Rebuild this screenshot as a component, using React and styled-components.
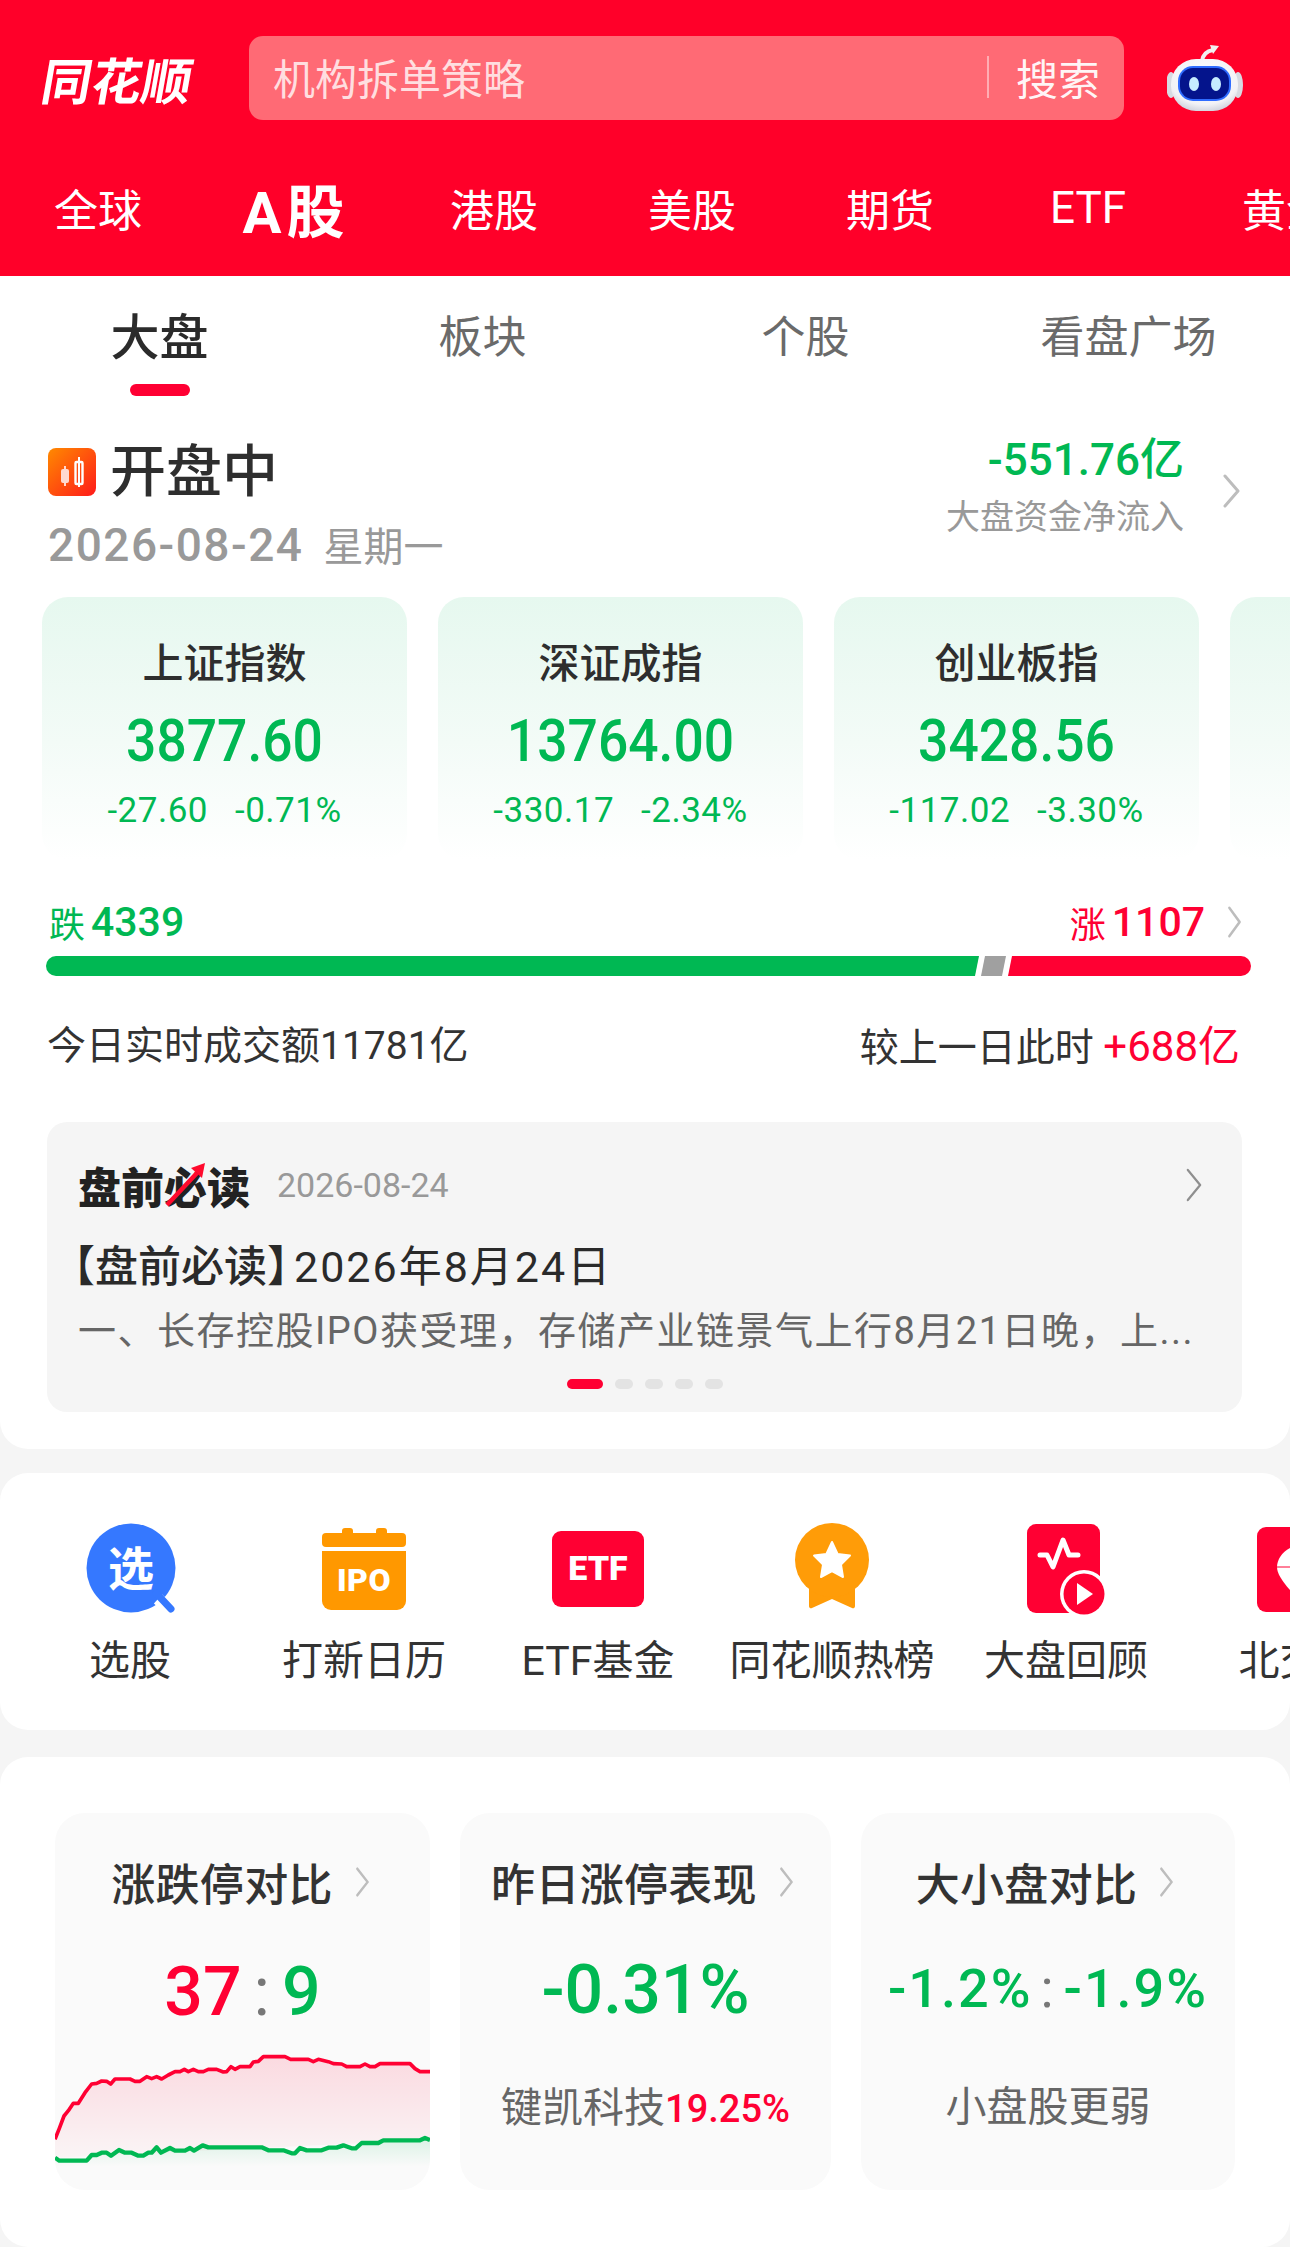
import React from "react";
import styled, { createGlobalStyle } from "styled-components";

const RED = "#ff0033";
const GREEN = "#00b853";
const SANS = `Roboto, "Noto Sans CJK SC", sans-serif`;
const CJK = `"Noto Sans CJK SC", sans-serif`;

const Global = createGlobalStyle`
  html, body { margin: 0; padding: 0; background: #f5f5f5; }
  body { font-family: ${SANS}; width: 1290px; height: 2247px; overflow: hidden; }
  * { box-sizing: border-box; }
`;

const Page = styled.div`
  width: 1290px;
  height: 2247px;
  overflow: hidden;
  background: #f5f5f5;
`;

const Header = styled.header`
  background: #ff0029;
  height: 276px;
  overflow: hidden;
  padding-top: 36px;
`;
const TopBar = styled.div`
  display: flex;
  align-items: center;
  height: 84px;
  padding-left: 43px;
`;
const Logo = styled.div`
  width: 206px;
  font-family: ${CJK};
  font-weight: 700;
  font-size: 50px;
  line-height: 84px;
  color: #fff;
  transform-origin: left center;
  transform: skewX(-10deg);
`;
const SearchBox = styled.div`
  width: 875px;
  height: 84px;
  border-radius: 14px;
  background: #ff6a75;
  display: flex;
  align-items: center;
  padding: 0 24px 3px;
  font-family: ${CJK};
  font-size: 42px;
  color: rgba(255, 255, 255, 0.78);
`;
const Placeholder = styled.span`
  flex: 1;
`;
const SearchDivider = styled.i`
  width: 2px;
  height: 42px;
  background: rgba(255, 255, 255, 0.45);
  margin-right: 27px;
`;
const SearchAction = styled.span`
  color: rgba(255, 255, 255, 0.95);
`;
const RobotSvg = styled.svg`
  width: 76px;
  height: 70px;
  margin-left: 43px;
  flex: none;
`;
const MarketTabs = styled.nav`
  display: flex;
  margin-top: 53px;
  margin-left: -1px;
  height: 70px;
  align-items: center;
`;
const MarketTab = styled.div`
  flex: 0 0 198px;
  text-align: center;
  font-family: ${SANS};
  color: #fff;
  font-size: ${(p) => (p.$on ? 58 : 44)}px;
  font-weight: ${(p) => (p.$on ? 700 : 400)};
  letter-spacing: ${(p) => (p.$on ? 5 : 0)}px;
  white-space: nowrap;
`;

const MainCard = styled.section`
  background: #fff;
  height: 1173px;
  border-radius: 0 0 28px 28px;
  overflow: hidden;
`;
const SubTabs = styled.div`
  display: grid;
  grid-template-columns: repeat(4, 323px);
  margin-left: -2px;
  height: 120px;
`;
const SubTab = styled.div`
  position: relative;
  text-align: center;
  font-family: ${CJK};
  line-height: 86px;
  font-size: ${(p) => (p.$on ? 49 : 44)}px;
  font-weight: ${(p) => (p.$on ? 500 : 400)};
  color: ${(p) => (p.$on ? "#2b2b2b" : "#6a6a6a")};
  padding-top: 15px;
  &::after {
    content: "";
    display: ${(p) => (p.$on ? "block" : "none")};
    position: absolute;
    left: 50%;
    margin-left: -30px;
    top: 108px;
    width: 60px;
    height: 12px;
    border-radius: 6px;
    background: ${RED};
  }
`;

const StatusRow = styled.div`
  height: 201px;
  padding: 40px 49px 0 48px;
  display: flex;
  justify-content: space-between;
  align-items: flex-start;
`;
const StatusLeft = styled.div``;
const StatusTitle = styled.div`
  display: flex;
  align-items: center;
  height: 72px;
  gap: 14px;
`;
const StatusWord = styled.span`
  font-family: ${CJK};
  font-size: 56px;
  line-height: 64px;
  font-weight: 500;
  color: #2e2e2e;
  padding-bottom: 10px;
`;
const DateLine = styled.div`
  height: 74px;
  line-height: 72px;
  color: #999;
  font-size: 46px;
  font-weight: 500;
  letter-spacing: 1.5px;
  white-space: nowrap;
`;
const Weekday = styled.span`
  font-family: ${CJK};
  font-size: 40px;
  font-weight: 400;
  letter-spacing: 0;
  margin-left: 20px;
`;
const FlowBlock = styled.div`
  display: flex;
  align-items: center;
  gap: 38px;
`;
const FlowText = styled.div`
  text-align: right;
`;
const FlowValue = styled.div`
  line-height: 48px;
  font-size: 44px;
  font-weight: 500;
  color: ${GREEN};
`;
const FlowLabel = styled.div`
  line-height: 62px;
  font-family: ${CJK};
  font-size: 34px;
  color: #999;
`;

const IndexRow = styled.div`
  display: flex;
  gap: 31px;
  padding-left: 42px;
  height: 263px;
  overflow: hidden;
`;
const IndexCard = styled.div`
  flex: 0 0 365px;
  height: 263px;
  border-radius: 26px;
  background: linear-gradient(180deg, #e6f8ef 0%, #f3fbf7 55%, #ffffff 100%);
  text-align: center;
  padding-top: 37px;
`;
const IndexName = styled.div`
  font-family: ${CJK};
  font-size: 41px;
  font-weight: 500;
  line-height: 52px;
  height: 52px;
  color: #2e2e2e;
`;
const IndexValue = styled.div`
  margin-top: 19px;
  line-height: 72px;
  height: 72px;
  font-size: 60px;
  font-weight: 500;
  color: ${GREEN};
  transform: scaleX(0.89);
`;
const IndexChange = styled.div`
  margin-top: 12px;
  line-height: 44px;
  height: 44px;
  font-size: 35px;
  letter-spacing: 0.5px;
  color: ${GREEN};
  display: flex;
  justify-content: center;
  gap: 27px;
`;

const BreadthHead = styled.div`
  margin-top: 40px;
  height: 44px;
  padding: 0 48px 0 49px;
  display: flex;
  justify-content: space-between;
  align-items: center;
`;
const BreadthText = styled.div`
  display: flex;
  align-items: center;
  font-size: 41px;
  font-weight: 500;
  line-height: 44px;
  color: ${(p) => p.$color};
`;
const BreadthWord = styled.span`
  font-family: ${CJK};
  font-size: 36px;
  font-weight: 400;
  margin-right: 6px;
`;
const BreadthSpacer = styled.i`
  width: 22px;
`;
const Bar = styled.div`
  margin: 12px 39px 0 46px;
  height: 20px;
  display: flex;
  gap: 2px;
`;
const BarSegment = styled.div`
  height: 20px;
  flex: ${(p) => p.$grow};
  background: ${(p) => p.$color};
  border-radius: ${(p) => p.$radius};
  clip-path: ${(p) => p.$clip};
`;
const TurnoverRow = styled.div`
  margin-top: 41px;
  height: 50px;
  padding: 0 50px 0 47px;
  display: flex;
  justify-content: space-between;
  align-items: center;
  font-size: 39px;
  color: #333;
  font-family: ${SANS};
`;
const RedText = styled.span`
  color: ${RED};
  font-size: 42px;
`;

const ReadPanel = styled.div`
  margin: 55px 48px 0 47px;
  height: 290px;
  border-radius: 20px;
  background: #f5f5f5;
  padding: 40px 39px 0 31px;
`;
const ReadHead = styled.div`
  display: flex;
  align-items: center;
  height: 46px;
`;
const ReadLogo = styled.div`
  position: relative;
  font-family: ${CJK};
  font-weight: 900;
  font-size: 43px;
  color: #222;
  line-height: 46px;
`;
const ReadArrow = styled.svg`
  position: absolute;
  left: 84px;
  top: 0;
  width: 46px;
  height: 46px;
`;
const ReadDate = styled.span`
  margin-left: 27px;
  font-size: 34px;
  color: #999;
  flex: 1;
`;
const ReadTitle = styled.div`
  margin: 29px 0 0 -26px;
  line-height: 60px;
  font-size: 43px;
  font-weight: 500;
  font-family: ${SANS};
  color: #2a2a2a;
  white-space: nowrap;
`;
const ReadBracket = styled.span`
  margin-right: -4px;
  letter-spacing: 0;
`;
const ReadTitleDate = styled.span`
  letter-spacing: 2px;
  margin-left: -12px;
  font-weight: 400;
`;
const ReadBody = styled.div`
  margin-top: 8px;
  line-height: 52px;
  font-size: 38px;
  letter-spacing: 1.5px;
  color: #666;
  white-space: nowrap;
`;
const Dots = styled.div`
  margin: 22px -39px 0 -31px;
  display: flex;
  gap: 12px;
  justify-content: center;
`;
const Dot = styled.i`
  display: block;
  height: 10px;
  width: ${(p) => (p.$on ? 36 : 18)}px;
  border-radius: 5px;
  background: ${(p) => (p.$on ? RED : "#e3e3e3")};
`;

const QuickCard = styled.section`
  margin-top: 24px;
  height: 257px;
  background: #fff;
  border-radius: 28px;
  padding: 50px 0 0 13px;
  display: flex;
  overflow: hidden;
`;
const QuickItem = styled.div`
  flex: 0 0 234px;
  display: flex;
  flex-direction: column;
  align-items: center;
`;
const QuickIcon = styled.svg`
  width: 120px;
  height: 95px;
  flex: none;
`;
const QuickLabel = styled.div`
  margin-top: 18px;
  line-height: 50px;
  font-size: 41px;
  font-family: ${SANS};
  color: #333;
  white-space: nowrap;
`;

const StatsCard = styled.section`
  margin-top: 27px;
  height: 490px;
  background: #fff;
  border-radius: 28px;
  padding: 56px 55px 0;
  display: grid;
  grid-template-columns: 375px 371px 374px;
  column-gap: 30px;
  align-items: start;
`;
const StatBox = styled.div`
  height: 377px;
  border-radius: 30px;
  background: #fafafa;
  overflow: hidden;
  text-align: center;
  padding-top: 39px;
  display: flex;
  flex-direction: column;
`;
const StatTitle = styled.div`
  height: 60px;
  flex: none;
  display: flex;
  align-items: center;
  justify-content: center;
  gap: 22px;
  font-family: ${CJK};
  font-size: 44px;
  letter-spacing: 0.3px;
  font-weight: 500;
  color: #333;
  white-space: nowrap;
  padding-right: ${(p) => p.$shift || 0}px;
`;
const StatValue = styled.div`
  margin-top: ${(p) => p.$top}px;
  height: 56px;
  flex: none;
  line-height: 56px;
  font-size: ${(p) => p.$size}px;
  letter-spacing: ${(p) => p.$spacing || 0}px;
  font-weight: 500;
  white-space: nowrap;
  color: ${(p) => p.$color || GREEN};
`;
const Colon = styled.span`
  color: #777;
  font-weight: 400;
  margin: 0 ${(p) => p.$gap}px;
`;
const GreenText = styled.span`
  color: ${GREEN};
`;
const StatNote = styled.div`
  margin-top: 61px;
  line-height: 50px;
  font-size: 41px;
  color: #666;
  font-family: ${CJK};
  white-space: nowrap;
`;
const NoteRed = styled.span`
  font-family: ${SANS};
  font-weight: 500;
  font-size: 38px;
  color: ${RED};
`;
const ChartSvg = styled.svg`
  display: block;
  flex: none;
  margin-top: auto;
  width: 375px;
  height: 170px;
`;

const Chevron = ({ w = 19, h = 34, c = "#bdbdbd", sw = 3 }) => (
  <svg width={w} height={h} viewBox="0 0 19 34" fill="none" preserveAspectRatio="none" style={{ flex: "none" }}>
    <path d="M3 2 L16 17 L3 32" stroke={c} strokeWidth={sw} strokeLinecap="round" strokeLinejoin="round" />
  </svg>
);

const Robot = () => (
  <RobotSvg viewBox="1168 42 76 70">
    <defs>
      <radialGradient id="head" cx="50%" cy="35%" r="70%">
        <stop offset="0" stopColor="#ffffff" />
        <stop offset="0.75" stopColor="#f2f2f6" />
        <stop offset="1" stopColor="#c9ccd8" />
      </radialGradient>
    </defs>
    <path d="M1203 60 C1204 53 1208 50 1214 49" stroke="#f1f1f1" strokeWidth="4" fill="none" />
    <path d="M1211 44 L1220 45 L1214 53 Z" fill="#f1f1f1" />
    <ellipse cx="1172" cy="84" rx="5" ry="13" fill="#d8dae2" />
    <ellipse cx="1239" cy="84" rx="5" ry="13" fill="#d8dae2" />
    <rect x="1172" y="58" width="67" height="52" rx="25" fill="url(#head)" />
    <rect x="1179" y="65" width="53" height="35" rx="15" fill="#2f6cff" />
    <rect x="1181" y="67" width="49" height="31" rx="13" fill="#04148c" />
    <ellipse cx="1195" cy="83" rx="5" ry="7" fill="#c6ecff" />
    <ellipse cx="1217" cy="83" rx="5" ry="7" fill="#c6ecff" />
  </RobotSvg>
);

const CandleIcon = () => (
  <svg width="48" height="48" viewBox="0 0 48 48" style={{ flex: "none" }}>
    <defs>
      <linearGradient id="cand" x1="0" y1="0" x2="1" y2="1">
        <stop offset="0" stopColor="#ff8a00" />
        <stop offset="1" stopColor="#ff1a1a" />
      </linearGradient>
    </defs>
    <rect width="48" height="48" rx="8" fill="url(#cand)" />
    <rect x="13" y="21" width="8" height="14" rx="2" fill="#ffd8d0" />
    <rect x="16" y="18" width="2" height="20" fill="#ffd8d0" />
    <rect x="27.5" y="14" width="7" height="22" rx="1" fill="none" stroke="#fff" strokeWidth="2.4" />
    <rect x="30" y="9" width="2" height="30" fill="#fff" />
  </svg>
);

const icons = {
  select: (
    <QuickIcon viewBox="0 0 120 95">
      <circle cx="61" cy="45" r="44.5" fill="#3578ff" />
      <path d="M88 76 L103 90" stroke="#fff" strokeWidth="12" />
      <path d="M86 70 L101 86" stroke="#3578ff" strokeWidth="7" strokeLinecap="round" />
      <text x="61" y="62" textAnchor="middle" fontFamily={CJK} fontWeight="700" fontSize="46" fill="#fff">选</text>
    </QuickIcon>
  ),
  ipo: (
    <QuickIcon viewBox="0 0 120 95">
      <rect x="38" y="5" width="11" height="10" rx="3" fill="#ff9800" />
      <rect x="72" y="5" width="11" height="10" rx="3" fill="#ff9800" />
      <rect x="18" y="10" width="84" height="14" rx="4" fill="#ff9800" />
      <path d="M18 28 H102 V78 a9 9 0 0 1 -9 9 H27 a9 9 0 0 1 -9 -9 Z" fill="#ff9800" />
      <text x="60" y="68" textAnchor="middle" fontFamily="Roboto, sans-serif" fontWeight="900" fontSize="32" letterSpacing="0.5" fill="#fff">IPO</text>
    </QuickIcon>
  ),
  etf: (
    <QuickIcon viewBox="0 0 120 95">
      <rect x="14" y="8" width="92" height="76" rx="9" fill="#ff0033" />
      <text x="60" y="57" textAnchor="middle" fontFamily="Roboto, sans-serif" fontWeight="900" fontSize="34" fill="#fff">ETF</text>
    </QuickIcon>
  ),
  medal: (
    <QuickIcon viewBox="0 0 120 95">
      <path d="M37 60 V83 a2 2 0 0 0 3 2 L60 76 L80 85 a2 2 0 0 0 3 -2 V60 Z" fill="#ff9c08" />
      <circle cx="60" cy="37" r="37" fill="#ff9c08" />
      <path d="M60 19 L65.6 31 L78 32.6 L69 41.6 L71 54 L60 48 L49 54 L51 41.6 L42 32.6 L54.4 31 Z" fill="#fff" strokeLinejoin="round" stroke="#fff" strokeWidth="2" />
    </QuickIcon>
  ),
  video: (
    <QuickIcon viewBox="0 0 120 95">
      <rect x="21" y="1" width="73" height="89" rx="9" fill="#ff0033" />
      <path d="M34 32 H41 L47 44 L57 17 L63 32 H72" stroke="#fff" strokeWidth="5" fill="none" strokeLinejoin="round" strokeLinecap="round" />
      <circle cx="78" cy="71" r="24" fill="#fff" />
      <circle cx="78" cy="71" r="20.5" fill="#ff0033" />
      <path d="M71 60 L87 71 L71 82 Z" fill="#fff" />
    </QuickIcon>
  ),
  pin: (
    <QuickIcon viewBox="0 0 120 95">
      <rect x="17" y="4" width="92" height="85" rx="9" fill="#ff0033" />
      <path d="M63 22 C47 22 37 34 37 44 C37 54 50 68 63 80 C76 68 89 54 89 44 C89 34 79 22 63 22 Z" fill="#fff" />
      <path d="M37 44 H89" stroke="#ff0033" strokeWidth="1" />
    </QuickIcon>
  ),
};

const quick = [
  ["选股", "select"],
  ["打新日历", "ipo"],
  ["ETF基金", "etf"],
  ["同花顺热榜", "medal"],
  ["大盘回顾", "video"],
  ["北交所", "pin"],
];

const indices = [
  ["上证指数", "3877.60", "-27.60", "-0.71%"],
  ["深证成指", "13764.00", "-330.17", "-2.34%"],
  ["创业板指", "3428.56", "-117.02", "-3.30%"],
  ["", "", "", ""],
];

const redPts = "15,358 28,325 42,288 55,272 70,250 85,250 105,218 125,192 140,190 155,183 170,184 182,192 195,177 240,177 255,184 270,184 290,170 305,176 320,170 335,177 355,165 375,155 390,155 403,148 415,155 430,148 445,155 460,155 475,148 500,148 520,156 530,155 543,140 555,148 570,140 600,140 610,126 625,124 640,110 705,110 722,118 775,118 790,125 805,118 835,125 850,131 875,132 890,140 930,140 945,132 960,140 975,140 990,131 1080,131 1095,146 1110,155 1140,155";
const greenPts = "15,413 28,422 110,422 125,405 140,405 155,398 170,398 183,407 207,390 225,398 245,398 265,407 280,407 295,398 305,398 320,382 333,398 360,384 375,392 405,392 420,384 432,392 458,376 475,382 635,382 655,391 700,391 725,400 735,400 750,384 770,391 815,391 835,383 860,383 880,376 905,385 917,385 935,369 985,369 1000,361 1110,361 1125,354 1140,360";

const Chart = () => (
  <ChartSvg viewBox="15 0 1125 510">
    <defs>
      <linearGradient id="redFill" x1="0" y1="110" x2="0" y2="420" gradientUnits="userSpaceOnUse">
        <stop offset="0" stopColor="#ff0033" stopOpacity="0.13" />
        <stop offset="1" stopColor="#ff0033" stopOpacity="0.02" />
      </linearGradient>
      <linearGradient id="greenFill" x1="0" y1="360" x2="0" y2="440" gradientUnits="userSpaceOnUse">
        <stop offset="0" stopColor="#00b853" stopOpacity="0.12" />
        <stop offset="1" stopColor="#00b853" stopOpacity="0" />
      </linearGradient>
    </defs>
    <polygon points={`${redPts} 1140,360 15,413`} fill="url(#redFill)" />
    <polygon points={`${greenPts} 1140,450 15,450`} fill="url(#greenFill)" />
    <polyline points={redPts} fill="none" stroke="#ff0033" strokeWidth="11" strokeLinejoin="round" />
    <polyline points={greenPts} fill="none" stroke="#00b853" strokeWidth="13" strokeLinejoin="round" />
  </ChartSvg>
);

export default function App() {
  return (
    <Page>
      <Global />
      <Header>
        <TopBar>
          <Logo>同花顺</Logo>
          <SearchBox>
            <Placeholder>机构拆单策略</Placeholder>
            <SearchDivider />
            <SearchAction>搜索</SearchAction>
          </SearchBox>
          <Robot />
        </TopBar>
        <MarketTabs>
          <MarketTab>全球</MarketTab>
          <MarketTab $on>A股</MarketTab>
          <MarketTab>港股</MarketTab>
          <MarketTab>美股</MarketTab>
          <MarketTab>期货</MarketTab>
          <MarketTab>ETF</MarketTab>
          <MarketTab>黄金</MarketTab>
        </MarketTabs>
      </Header>

      <MainCard>
        <SubTabs>
          <SubTab $on>大盘</SubTab>
          <SubTab>板块</SubTab>
          <SubTab>个股</SubTab>
          <SubTab>看盘广场</SubTab>
        </SubTabs>

        <StatusRow>
          <StatusLeft>
            <StatusTitle>
              <CandleIcon />
              <StatusWord>开盘中</StatusWord>
            </StatusTitle>
            <DateLine>
              2026-08-24<Weekday>星期一</Weekday>
            </DateLine>
          </StatusLeft>
          <FlowBlock>
            <FlowText>
              <FlowValue>-551.76亿</FlowValue>
              <FlowLabel>大盘资金净流入</FlowLabel>
            </FlowText>
            <Chevron />
          </FlowBlock>
        </StatusRow>

        <IndexRow>
          {indices.map(([name, value, change, pct], i) => (
            <IndexCard key={i}>
              <IndexName>{name}</IndexName>
              <IndexValue>{value}</IndexValue>
              <IndexChange>
                <span>{change}</span>
                <span>{pct}</span>
              </IndexChange>
            </IndexCard>
          ))}
        </IndexRow>

        <BreadthHead>
          <BreadthText $color={GREEN}>
            <BreadthWord>跌</BreadthWord>4339
          </BreadthText>
          <BreadthText $color={RED}>
            <BreadthWord>涨</BreadthWord>1107
            <BreadthSpacer />
            <Chevron w={15} h={32} />
          </BreadthText>
        </BreadthHead>
        <Bar>
          <BarSegment $grow="933" $color={GREEN} $radius="10px 0 0 10px" $clip="polygon(0 0, 100% 0, calc(100% - 4px) 100%, 0 100%)" />
          <BarSegment $grow="25" $color="#a0a0a0" $radius="0" $clip="polygon(4px 0, 100% 0, calc(100% - 4px) 100%, 0 100%)" />
          <BarSegment $grow="243" $color={RED} $radius="0 10px 10px 0" $clip="polygon(4px 0, 100% 0, 100% 100%, 0 100%)" />
        </Bar>

        <TurnoverRow>
          <span>今日实时成交额11781亿</span>
          <span>
            较上一日此时 <RedText>+688亿</RedText>
          </span>
        </TurnoverRow>

        <ReadPanel>
          <ReadHead>
            <ReadLogo>
              盘前必读
              <ReadArrow viewBox="0 0 46 46">
                <path d="M5 43 L35 11" stroke="#ff0a2d" strokeWidth="4.5" />
                <path d="M29 6 L43 1 L40 16 Z" fill="#ff0a2d" />
              </ReadArrow>
            </ReadLogo>
            <ReadDate>2026-08-24</ReadDate>
            <Chevron w={18} h={34} c="#8f8f8f" sw={2.4} />
          </ReadHead>
          <ReadTitle>
            <ReadBracket>【盘前必读】</ReadBracket>
            <ReadTitleDate>2026年8月24日</ReadTitleDate>
          </ReadTitle>
          <ReadBody>一、长存控股IPO获受理，存储产业链景气上行8月21日晚，上...</ReadBody>
          <Dots>
            <Dot $on />
            <Dot />
            <Dot />
            <Dot />
            <Dot />
          </Dots>
        </ReadPanel>
      </MainCard>

      <QuickCard>
        {quick.map(([label, icon]) => (
          <QuickItem key={label}>
            {icons[icon]}
            <QuickLabel>{label}</QuickLabel>
          </QuickItem>
        ))}
      </QuickCard>

      <StatsCard>
        <StatBox>
          <StatTitle $shift={4}>
            涨跌停对比
            <Chevron w={15} h={30} />
          </StatTitle>
          <StatValue $size={68} $top={52} $color={RED}>
            37<Colon $gap={12}>:</Colon>
            <GreenText>9</GreenText>
          </StatValue>
          <Chart />
        </StatBox>
        <StatBox>
          <StatTitle $shift={6}>
            昨日涨停表现
            <Chevron w={15} h={30} />
          </StatTitle>
          <StatValue $size={68} $top={50}>-0.31%</StatValue>
          <StatNote>
            键凯科技<NoteRed>19.25%</NoteRed>
          </StatNote>
        </StatBox>
        <StatBox>
          <StatTitle $shift={6}>
            大小盘对比
            <Chevron w={15} h={30} />
          </StatTitle>
          <StatValue $size={54} $top={49} $spacing={2}>
            -1.2%<Colon $gap={8}>:</Colon>-1.9%
          </StatValue>
          <StatNote>小盘股更弱</StatNote>
        </StatBox>
      </StatsCard>
    </Page>
  );
}
